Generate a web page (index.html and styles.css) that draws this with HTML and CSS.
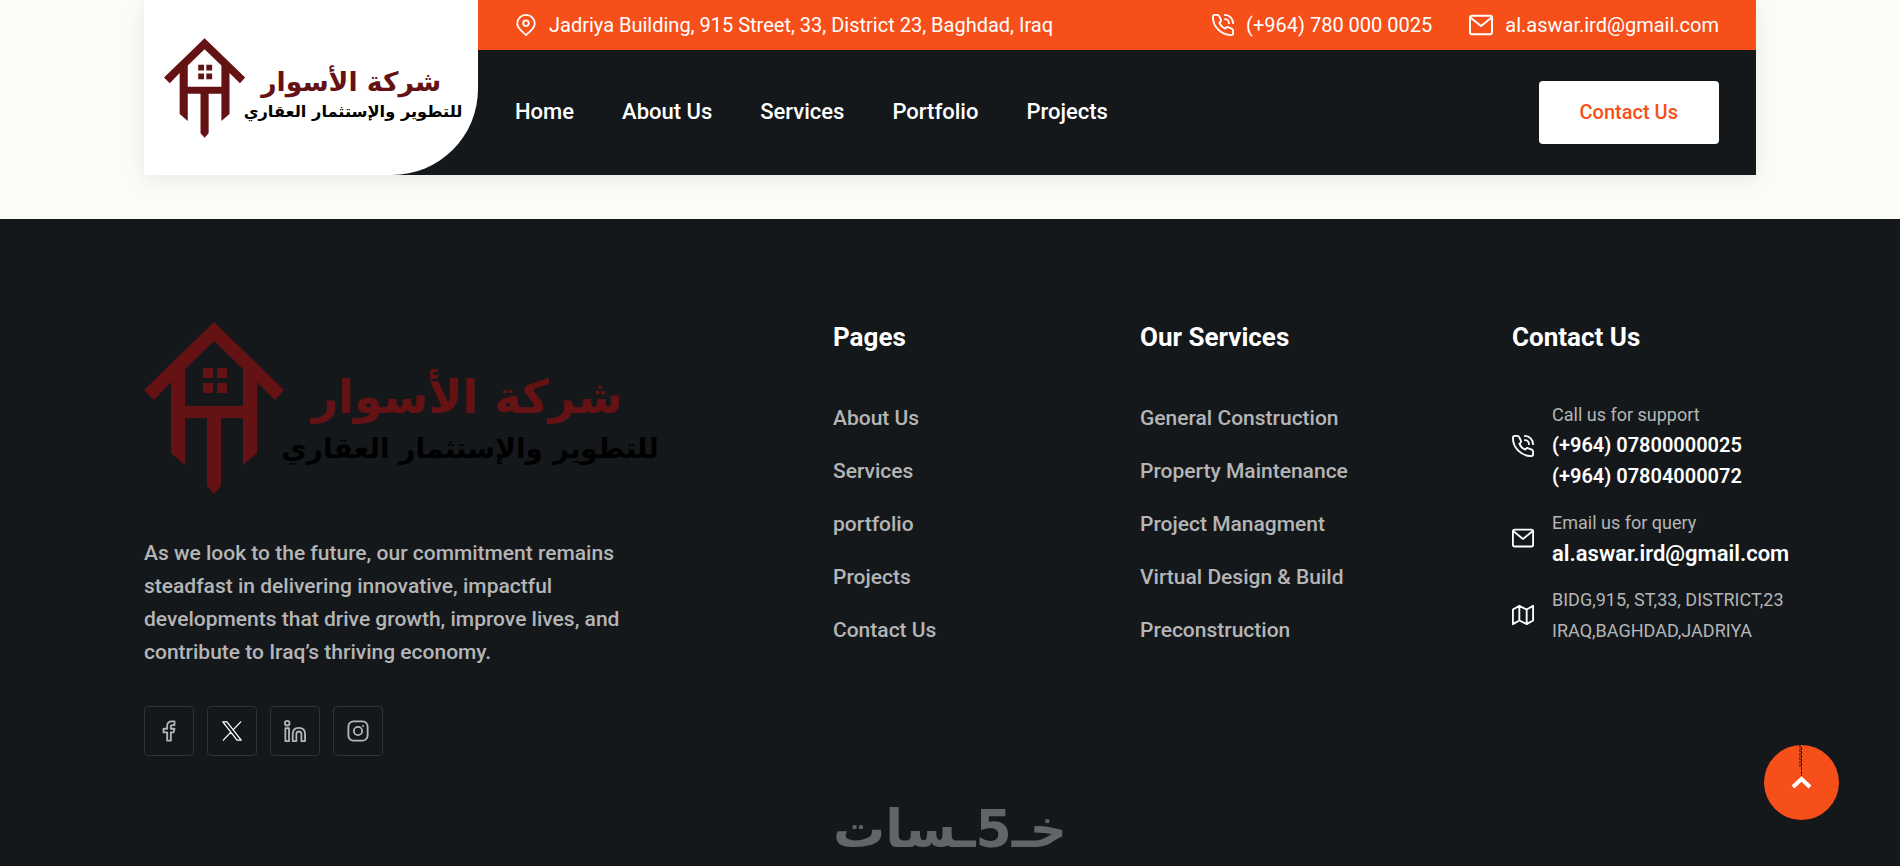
FILE: index.html
```html
<!DOCTYPE html>
<html lang="en">
<head>
    <meta charset="UTF-8">
    <meta name="viewport" content="width=device-width, initial-scale=1.0">
    <title>Al Aswar - Real Estate Development</title>
    <link rel="stylesheet" href="styles.css">
</head>
<body>
    <!-- Shared shapes -->
    <svg class="sprite" aria-hidden="true">
        <symbol id="logo" viewBox="0 0 514 172" overflow="visible">
            <path class="logo-red" fill-rule="evenodd" d="M70 0L140 68L131 78L113 60V131L99 143V96H77V164L70 172L63 164V96H41V143L27 131V60L10 78L0 68ZM70 19L41 47V84H99V47Z"/>
            <path class="logo-red" d="M59 46h10v10H59zM73 46h10v10H73zM59 61h10v10H59zM73 61h10v10H73z"/>
            <text class="logo-red logo-name" x="323" y="91" text-anchor="middle">شركة الأسوار</text>
            <text class="logo-tag" x="326" y="136" text-anchor="middle">للتطوير والإستثمار العقاري</text>
        </symbol>
        <symbol id="phone" viewBox="0 0 24 24">
            <path d="M8 2.5C7.500 1.500 6.800 1 5.800 1H3C1.800 1 1 2 1 3.200C1 14 10 23 20.800 23C22 23 23 22.200 23 21V18C23 17 22.500 16.500 21.500 16L18 14.500C17 14 16 14.200 15.300 15L14.500 16C12 15 9 12 8 9.500L9 8.700C9.800 8 10 7 9.600 6Z"/>
            <path d="M14 1C19 1 23 5 23 10M14 5.500C16.500 5.500 18.500 7.500 18.500 10"/>
        </symbol>
        <symbol id="mail" viewBox="0 0 24 24">
            <rect x="1" y="2.800" width="22" height="18.500" rx="2"/>
            <path d="M2 5L12 13L22 5"/>
        </symbol>
    </svg>

    <header class="header">
        <a href="#" class="header-logo" aria-label="Al Aswar home">
            <svg><use href="#logo"/></svg>
        </a>
        <div class="header-main">
            <div class="top-bar">
                <span class="top-item">
                    <svg class="icon" viewBox="0 0 24 24"><path d="M12 23C10 20.500 2.500 16 2.500 10.500C2.500 5 6.800 1 12 1S21.500 5 21.500 10.500C21.500 16 14 20.500 12 23Z"/><circle cx="12" cy="10" r="3"/></svg>
                    Jadriya Building, 915 Street, 33, District 23, Baghdad, Iraq
                </span>
                <div class="top-right">
                    <a href="tel:+9647800000025" class="top-item"><svg class="icon"><use href="#phone"/></svg>(+964) 780 000 0025</a>
                    <a href="mailto:al.aswar.ird@gmail.com" class="top-item"><svg class="icon icon-mail"><use href="#mail"/></svg>al.aswar.ird@gmail.com</a>
                </div>
            </div>
            <div class="nav-bar">
                <nav class="nav">
                    <a href="#">Home</a>
                    <a href="#">About Us</a>
                    <a href="#">Services</a>
                    <a href="#">Portfolio</a>
                    <a href="#">Projects</a>
                </nav>
                <a href="#" class="contact-button">Contact Us</a>
            </div>
        </div>
    </header>

    <footer class="footer">
        <div class="footer-grid">
            <div class="footer-about">
                <svg class="footer-logo" role="img" aria-label="Al Aswar"><use href="#logo"/></svg>
                <p>As we look to the future, our commitment remains steadfast in delivering innovative, impactful developments that drive growth, improve lives, and contribute to Iraq’s thriving economy.</p>
                <div class="social">
                    <a href="#" aria-label="Facebook"><svg class="icon" viewBox="0 0 24 24"><path d="M18 1.500H15C11.500 1.500 10 3.500 10 6.500V9.500H6V13.500H10V22.500H14V13.500H17L18 9.500H14V7C14 6 14.500 5.500 15.500 5.500H18Z"/></svg></a>
                    <a href="#" aria-label="X" class="x-link"><svg class="icon" viewBox="0 0 24 24"><path d="M2 2H6.500L22 22H17.500ZM21.500 2L13.500 10.500M10.500 13.500L2.500 22"/></svg></a>
                    <a href="#" aria-label="LinkedIn"><svg class="icon" viewBox="0 0 24 24"><circle cx="3.500" cy="3.500" r="2.500"/><path d="M1.500 9H5.500V23H1.500ZM9.500 23V15.500C9.500 11 12 8.500 16.200 8.500S23 11 23 15.500V23H19V15.500C19 13.500 18 12.500 16.200 12.500S13.500 13.500 13.500 15.500V23Z"/></svg></a>
                    <a href="#" aria-label="Instagram"><svg class="icon" viewBox="0 0 24 24"><rect x="1.500" y="1.500" width="21" height="21" rx="5.500"/><circle cx="12" cy="12" r="4.500"/><path d="M17.500 6.500h.1"/></svg></a>
                </div>
            </div>

            <div class="footer-col">
                <h3>Pages</h3>
                <ul>
                    <li><a href="#">About Us</a></li>
                    <li><a href="#">Services</a></li>
                    <li><a href="#">portfolio</a></li>
                    <li><a href="#">Projects</a></li>
                    <li><a href="#">Contact Us</a></li>
                </ul>
            </div>

            <div class="footer-col">
                <h3>Our Services</h3>
                <ul>
                    <li><a href="#">General Construction</a></li>
                    <li><a href="#">Property Maintenance</a></li>
                    <li><a href="#">Project Managment</a></li>
                    <li><a href="#">Virtual Design &amp; Build</a></li>
                    <li><a href="#">Preconstruction</a></li>
                </ul>
            </div>

            <div class="footer-col">
                <h3>Contact Us</h3>
                <div class="contact-list">
                    <div class="contact-item">
                        <svg class="icon"><use href="#phone"/></svg>
                        <div>
                            <span>Call us for support</span>
                            <a href="tel:+96407800000025">(+964) 07800000025</a>
                            <a href="tel:+96407804000072">(+964) 07804000072</a>
                        </div>
                    </div>
                    <div class="contact-item">
                        <svg class="icon"><use href="#mail"/></svg>
                        <div>
                            <span>Email us for query</span>
                            <a href="mailto:al.aswar.ird@gmail.com" class="email">al.aswar.ird@gmail.com</a>
                        </div>
                    </div>
                    <div class="contact-item">
                        <svg class="icon" viewBox="0 0 24 24"><path d="M1 6L8 2L16 6L23 2V18L16 22L8 18L1 22ZM8 2V18M16 6V22"/></svg>
                        <div>
                            <span>BIDG,915, ST,33, DISTRICT,23</span>
                            <span>IRAQ,BAGHDAD,JADRIYA</span>
                        </div>
                    </div>
                </div>
            </div>
        </div>
        <a href="#" class="khamsat" lang="ar" dir="rtl">خـ5ـسات</a>
    </footer>

    <button type="button" class="scroll-top" aria-label="Back to top">
        <svg viewBox="0 0 75 75"><path class="seam" d="M36 0V22M37.500 2V31"/><path class="chevron" d="M29 42L37.500 34L46 42"/></svg>
    </button>

    <script>
        document.querySelector('.scroll-top').addEventListener('click', function() {
            window.scrollTo({ top: 0, behavior: 'smooth' });
        });
    </script>
</body>
</html>
```
FILE: styles.css
```css
* {
    margin: 0;
    padding: 0;
    box-sizing: border-box;
}

body {
    background: #fbfcf6;
    font-family: Roboto, "Liberation Sans", sans-serif;
    font-size: 20px;
}

a {
    color: inherit;
    text-decoration: none;
}

ul {
    list-style: none;
}

.sprite {
    position: absolute;
    width: 0;
    height: 0;
}

.icon {
    width: 22px;
    height: 22px;
    flex: none;
    fill: none;
    stroke: currentColor;
    stroke-width: 2;
    stroke-linecap: round;
    stroke-linejoin: round;
}

.icon-mail {
    width: 24px;
    height: 24px;
}

.logo-red {
    fill: #651214;
}

.logo-name,
.logo-tag {
    font-family: "DejaVu Sans", sans-serif;
    font-weight: bold;
}

.logo-name {
    font-size: 46px;
}

.logo-tag {
    font-size: 28px;
    fill: #000;
}

/* Header */
.header {
    display: flex;
    max-width: 1612px;
    margin: 0 auto 44px;
    background: #14181b;
    box-shadow: 0 4px 20px rgba(0, 0, 0, 0.08);
}

.header-logo {
    display: flex;
    align-items: center;
    width: 334px;
    padding: 0 16px 0 20px;
    background: #fff;
    border-bottom-right-radius: 86px;
}

.header-logo svg {
    width: 298px;
    height: 100px;
    overflow: visible;
}

.header-main {
    flex: 1;
}

.top-bar {
    display: flex;
    justify-content: space-between;
    align-items: center;
    height: 50px;
    padding: 0 37px;
    background: #f64f1a;
    color: #fff;
}

.top-item {
    display: flex;
    align-items: center;
    gap: 12px;
}

.top-right {
    display: flex;
    gap: 37px;
}

.nav-bar {
    display: flex;
    justify-content: space-between;
    align-items: center;
    height: 125px;
    padding: 0 37px;
}

.nav {
    display: flex;
    gap: 48px;
    padding-bottom: 2px;
    color: #fff;
    font-size: 22px;
    font-weight: 500;
}

.contact-button {
    padding: 0 41px;
    background: #fff;
    border-radius: 4px;
    color: #f64f1a;
    font-weight: 500;
    line-height: 63px;
}

/* Footer */
.footer {
    padding: 100px 144px 0;
    background: #14181b;
    color: #b4b5b6;
}

.footer-grid {
    display: grid;
    grid-template-columns: 689fr 307fr 372fr 244fr;
    max-width: 1612px;
    margin: 0 auto;
}

.footer-grid > div {
    min-width: 0;
}

.footer-logo {
    display: block;
    width: 514px;
    height: 172px;
    margin: 3px 0 43px;
    overflow: visible;
}

.footer-about p {
    max-width: 510px;
    font-size: 21px;
    font-weight: 500;
    line-height: 33px;
}

.social {
    display: flex;
    gap: 13px;
    margin-top: 37px;
}

.social a {
    display: flex;
    justify-content: center;
    align-items: center;
    width: 50px;
    height: 50px;
    border: 1px solid #303336;
    border-radius: 4px;
}

.social .x-link {
    color: #fff;
}

.footer-col h3 {
    margin: 1px 0 48px;
    color: #fff;
    font-size: 26px;
    line-height: 34px;
}

.footer-col ul {
    display: grid;
    gap: 20px;
    font-size: 21px;
    font-weight: 500;
    line-height: 33px;
}

.contact-list {
    display: grid;
    gap: 15px;
    margin-top: -3px;
    white-space: nowrap;
}

.contact-item {
    display: flex;
    align-items: center;
    gap: 18px;
    font-size: 18px;
    line-height: 31px;
}

.contact-item .icon {
    color: #fff;
}

.contact-item span,
.contact-item a {
    display: block;
}

.contact-item a {
    color: #fff;
    font-size: 20px;
    font-weight: 600;
}

.contact-item .email {
    font-size: 22px;
}

.social .x-link .icon {
    stroke-width: 1.4;
}

.khamsat {
    display: block;
    width: fit-content;
    margin: 36px auto 0;
    color: #626466;
    font-family: "DejaVu Sans", sans-serif;
    font-size: 52px;
    font-weight: bold;
    line-height: 74px;
}

.scroll-top {
    position: fixed;
    right: 61px;
    bottom: 46px;
    width: 75px;
    height: 75px;
    background: #f64f1a;
    border: none;
    border-radius: 50%;
    cursor: pointer;
}

.scroll-top svg {
    display: block;
    fill: none;
}

.seam {
    stroke: #14181b;
    stroke-dasharray: 3 1;
}

.chevron {
    stroke: #fff;
    stroke-width: 4;
}

@media (max-width: 1200px) {
    .footer {
        padding: 60px 24px 0;
    }

    .footer-grid {
        grid-template-columns: 1fr 1fr;
        gap: 40px;
    }

    .header,
    .nav-bar,
    .top-bar {
        flex-wrap: wrap;
        height: auto;
    }
}
```
